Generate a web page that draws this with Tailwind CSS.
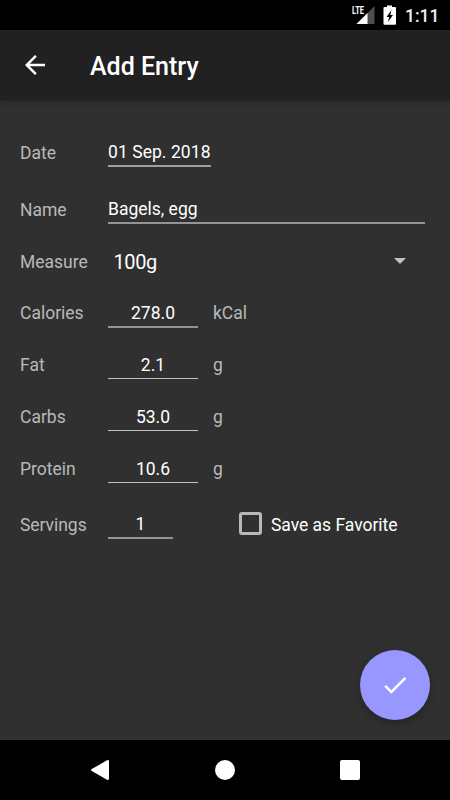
<!DOCTYPE html>
<html lang="en">
<head>
<meta charset="utf-8">
<title>Add Entry</title>
<script src="https://cdn.jsdelivr.net/npm/@tailwindcss/browser@4"></script>
</head>
<body class="bg-black">
<div class="w-[450px] h-[800px] flex flex-col overflow-hidden bg-[#303030] text-white font-[Roboto,sans-serif] text-[17.5px] leading-5">
  <!-- Status bar -->
  <div class="h-[30px] shrink-0 bg-black flex items-start justify-end pr-[10px]">
    <svg class="w-[24px] h-[26px] mr-[8px]" viewBox="0 0 24 26">
      <path d="M23.500 6V24H5.500z" fill="#4d4d4d"/><path d="M16.500 13V24H5.500z" fill="#fff"/>
      <text x="1" y="13.800" font-family="Roboto" font-weight="700" font-size="10.500" fill="#fff" textLength="12" lengthAdjust="spacingAndGlyphs">LTE</text>
    </svg>
    <svg class="w-[14px] h-[26px] mr-[8px]" viewBox="0 0 14 26">
      <path d="M4 5.500h5v1.500h3q1 0 1 1V23.700q0 1-1 1h-10.500q-1 0-1-1V8q0-1 1-1H4z" fill="#fff"/>
      <path d="M8.500 10L3.500 17H6.200L5 22L10 15H7.300z" fill="#000"/>
    </svg>
    <span class="font-medium text-[17.5px] mt-[6px] w-[35px] whitespace-nowrap text-[#f0f0f0]">1:11</span>
  </div>
  <!-- App bar -->
  <div class="h-[70px] shrink-0 bg-[#212121] flex items-center shadow-[0_2px_5px_rgba(0,0,0,0.25)] pl-[20px] z-10">
    <svg class="w-[30px] h-[30px]" viewBox="0 0 24 24" fill="#fff"><path d="M20 11H7.830l5.590-5.590L12 4l-8 8 8 8 1.410-1.410L7.830 13H20v-2z"/></svg>
    <h1 class="ml-[40px] mt-[3px] text-[25px] leading-8 font-medium">Add Entry</h1>
  </div>
  <!-- Form -->
  <form class="h-[640px] shrink-0 flex flex-col pl-5 pr-[25px] text-[#b9b9b9] relative">
    <div class="h-[67px] flex items-end">
      <span class="w-[88px] mb-[4px]">Date</span>
      <span class="w-[103px] text-white border-b-2 border-[#a0a0a0] pb-[3px] whitespace-nowrap tracking-[0.06px]">01 Sep. 2018</span>
    </div>
    <div class="h-[57px] flex items-end">
      <span class="w-[88px] mb-[4px]">Name</span>
      <span class="flex-1 text-white border-b-2 border-[#949494] pb-[3px]">Bagels, egg</span>
    </div>
    <div class="h-[52px] flex items-end">
      <span class="w-[88px] mb-[4px]">Measure</span>
      <span class="ml-[5.5px] flex-1 text-white text-[20px] tracking-[-0.4px] mb-[4px]">100g</span>
      <svg class="w-[12px] h-[6px] mr-[19px] mb-[12px]" viewBox="0 0 12 6"><path d="M0 0h12L6 6z" fill="#c1c1c1"/></svg>
    </div>
    <div class="h-[52px] flex items-end">
      <span class="w-[88px] mb-[5px]">Calories</span>
      <span class="w-[90px] text-center text-white border-b-2 border-[#949494] pb-[3px]">278.0</span>
      <span class="ml-[15px] mb-[5px]">kCal</span>
    </div>
    <div class="h-[52px] flex items-end">
      <span class="w-[88px] mb-[5px]">Fat</span>
      <span class="w-[90px] text-center text-white border-b border-[#c1c1c1] pb-[3px] mb-px">2.1</span>
      <span class="ml-[15px] mb-[5px]">g</span>
    </div>
    <div class="h-[52px] flex items-end">
      <span class="w-[88px] mb-[5px]">Carbs</span>
      <span class="w-[90px] text-center text-white border-b border-[#c1c1c1] pb-[3px] mb-px">53.0</span>
      <span class="ml-[15px] mb-[5px]">g</span>
    </div>
    <div class="h-[52px] flex items-end">
      <span class="w-[88px] mb-[5px]">Protein</span>
      <span class="w-[90px] text-center text-white border-b border-[#c1c1c1] pb-[3px] mb-px">10.6</span>
      <span class="ml-[15px] mb-[5px]">g</span>
    </div>
    <div class="h-[55px] flex items-end">
      <span class="w-[88px] mb-[4px] tracking-[-0.05px]">Servings</span>
      <span class="w-[65px] text-center text-white border-b-2 border-[#949494] pb-[3px]">1</span>
      <span class="ml-[66px] mb-[4px] size-[23px] border-3 rounded-[3px] border-[#b8b8b8]"></span>
      <span class="ml-[9px] mb-[4px] text-white whitespace-nowrap tracking-[-0.03px]">Save as Favorite</span>
    </div>
    <button type="button" aria-label="Save" class="absolute left-[360px] top-[550px] size-[70px] rounded-full bg-[#9896ff] shadow-[0_4px_9px_rgba(0,0,0,0.25)] flex items-center justify-center">
      <svg class="w-[30px] h-[30px]" viewBox="0 0 24 24" fill="#fff"><path d="M9 16.170L4.830 12l-1.420 1.410L9 19 21 7l-1.410-1.410z"/></svg>
    </button>
  </form>
  <!-- Navigation bar -->
  <div class="h-[60px] shrink-0 bg-black flex items-center justify-between pl-[90px] pr-[90px]">
    <svg class="w-[20px] h-[20px]" viewBox="0 0 20 20"><path d="M1.800 9.100L17 .300Q19 -.500 19 1.500V18.500Q19 20.500 17 19.700L1.800 10.900Q.200 10 1.800 9.100z" fill="#fff"/></svg>
    <span class="size-5 rounded-full bg-white"></span>
    <span class="size-5 rounded-[2px] bg-white"></span>
  </div>
</div>
</body>
</html>
